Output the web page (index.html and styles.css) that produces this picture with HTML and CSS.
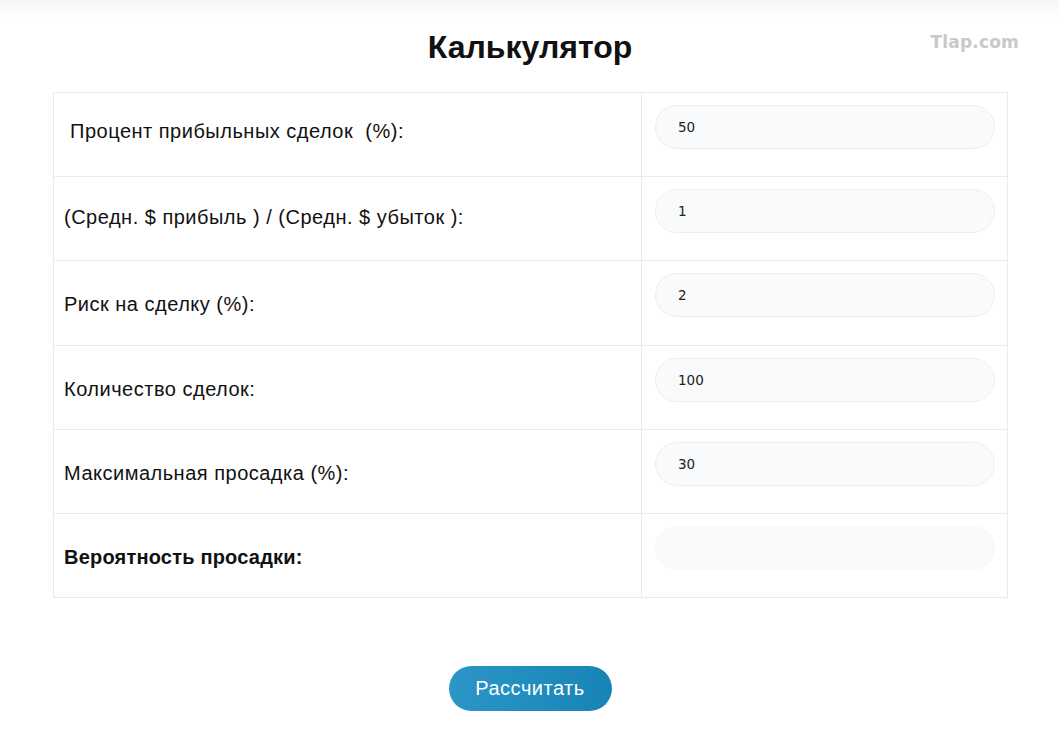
FILE: index.html
```html
<!DOCTYPE html>
<html lang="ru">
<head>
<meta charset="utf-8">
<title>Калькулятор</title>
<link rel="stylesheet" href="styles.css">
</head>
<body>
<div class="page">
  <header class="header">
    <h1 class="title">Калькулятор</h1>
    <span class="brand">Tlap.com</span>
  </header>
  <div class="calc">
    <div class="row">
      <div class="label high">&nbsp;Процент прибыльных сделок&nbsp; (%):</div>
      <div class="field"><div class="input">50</div></div>
    </div>
    <div class="row">
      <div class="label mid">(Средн. $ прибыль ) / (Средн. $ убыток ):</div>
      <div class="field"><div class="input">1</div></div>
    </div>
    <div class="row tall">
      <div class="label">Риск на сделку (%):</div>
      <div class="field"><div class="input">2</div></div>
    </div>
    <div class="row">
      <div class="label">Количество сделок:</div>
      <div class="field"><div class="input">100</div></div>
    </div>
    <div class="row">
      <div class="label">Максимальная просадка (%):</div>
      <div class="field"><div class="input">30</div></div>
    </div>
    <div class="row">
      <div class="label bold">Вероятность просадки:</div>
      <div class="field"><div class="input result"></div></div>
    </div>
  </div>
  <div class="actions">
    <button class="btn">Рассчитать</button>
  </div>
</div>
</body>
</html>
```
FILE: styles.css
```css
html, body {
  margin: 0;
  padding: 0;
  background: #ffffff;
}
body {
  font-family: "Liberation Sans", Arial, sans-serif;
  color: #111;
}
.page {
  min-height: 750px;
  background: linear-gradient(#f6f6f6 0, #fdfdfd 14px, #ffffff 20px);
  padding-top: 24px;
  box-sizing: border-box;
}
.header {
  position: relative;
  height: 68px;
  display: flex;
  justify-content: center;
}
.title {
  margin: 0;
  font-size: 32px;
  line-height: 46px;
  font-weight: bold;
  color: #111;
  padding-left: 1px;
}
.brand {
  position: absolute;
  right: 40px;
  top: 8px;
  font-family: "DejaVu Sans", sans-serif;
  font-weight: bold;
  font-size: 17px;
  color: #c9c9c9;
  letter-spacing: 0.2px;
}
.calc {
  margin: 0 51px 0 53px;
  border: 1px solid #ebebeb;
  border-bottom: none;
}
.row {
  display: grid;
  grid-template-columns: 588px 1fr;
  height: 84px;
  box-sizing: border-box;
  border-bottom: 1px solid #ebebeb;
}
.row.tall {
  height: 85px;
}
.label {
  display: flex;
  align-items: center;
  padding-left: 10px;
  padding-top: 3px;
  font-size: 20px;
  letter-spacing: 0.5px;
  color: #111;
  border-right: 1px solid #ebebeb;
}
.label.high {
  padding-top: 0;
  padding-bottom: 6px;
}
.label.mid {
  padding-top: 0;
  padding-bottom: 2px;
}
.label.bold {
  font-weight: bold;
  letter-spacing: 0.2px;
}
.field {
  padding: 12px 12px 0 13px;
}
.input {
  box-sizing: border-box;
  height: 44px;
  border: 1px solid #eeeeee;
  border-radius: 22px;
  background: #f9fafb;
  padding-left: 22px;
  display: flex;
  align-items: center;
  font-family: "DejaVu Sans", sans-serif;
  font-size: 13.5px;
  color: #222;
}
.input.result {
  border-color: #f7f8f9;
}
.actions {
  display: flex;
  justify-content: center;
  padding-top: 68px;
  padding-left: 1px;
}
.btn {
  width: 163px;
  height: 45px;
  border: none;
  border-radius: 23px;
  background: linear-gradient(90deg, #2b96c7, #1884b6);
  color: #fff;
  font-family: "Liberation Sans", Arial, sans-serif;
  font-size: 20px;
  letter-spacing: 0.5px;
  cursor: pointer;
}
```
